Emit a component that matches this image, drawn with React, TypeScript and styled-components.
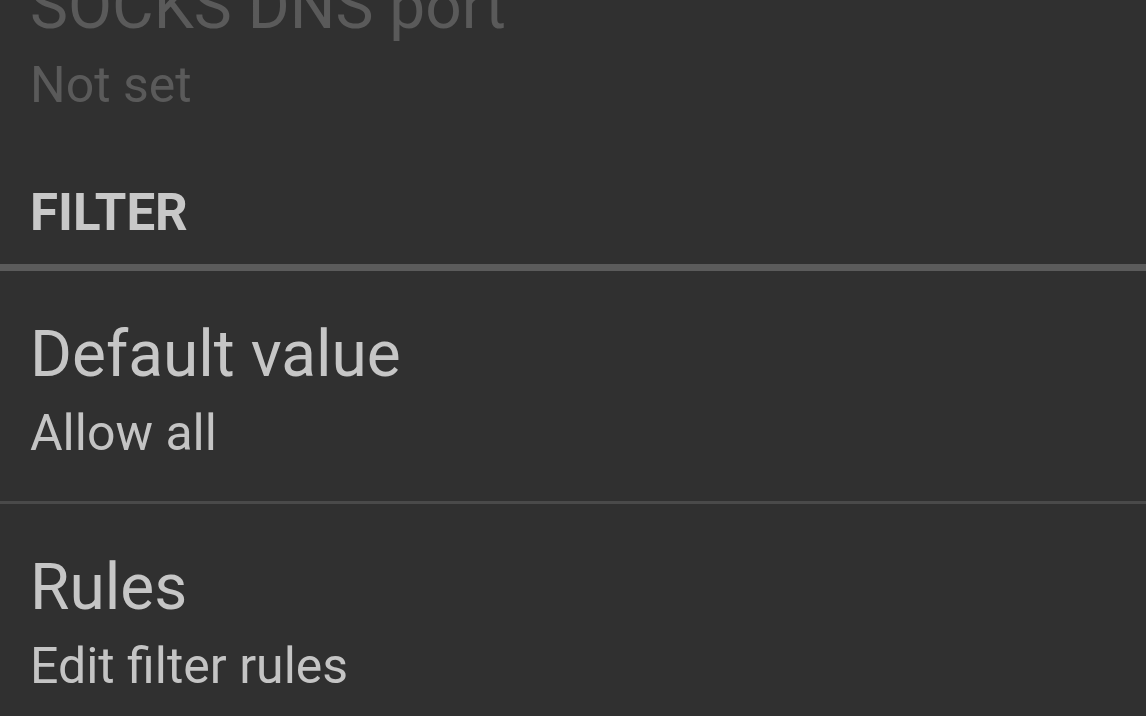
import React from 'react';
import styled, { createGlobalStyle } from 'styled-components';

type PrefItem = {
  title: string;
  summary: string;
  disabled?: boolean;
};

const GlobalStyle = createGlobalStyle`
  html, body {
    margin: 0;
    padding: 0;
    background: #303030;
  }
  body {
    font-family: Roboto, "Liberation Sans", sans-serif;
  }
`;

const proxyItems: PrefItem[] = [{ title: 'SOCKS DNS port', summary: 'Not set', disabled: true }];

const filterItems: PrefItem[] = [
  { title: 'Default value', summary: 'Allow all' },
  { title: 'Rules', summary: 'Edit filter rules' },
];

const Preference = ({ title, summary, disabled, divider }: PrefItem & { divider?: boolean }) => (
  <Row $divider={divider}>
    <Title $disabled={disabled}>{title}</Title>
    <Summary $disabled={disabled}>{summary}</Summary>
  </Row>
);

const App = () => {
  return (
    <Screen>
      <GlobalStyle />
      <List>
        {proxyItems.map((item) => (
          <Preference key={item.title} {...item} />
        ))}
        <Category>FILTER</Category>
        {filterItems.map((item, i) => (
          <Preference key={item.title} {...item} divider={i < filterItems.length - 1} />
        ))}
      </List>
    </Screen>
  );
};

const Screen = styled.div`
  width: 1146px;
  height: 716px;
  overflow: hidden;
  background: #303030;
`;

const List = styled.div`
  display: flex;
  flex-direction: column;
  margin-top: -77px;
`;

const Row = styled.div<{ $divider?: boolean }>`
  display: flex;
  flex-direction: column;
  padding: 46px 30px 38px;
  border-bottom: ${(p) => (p.$divider ? '3px solid #4a4a4a' : 'none')};
`;

const Title = styled.div<{ $disabled?: boolean }>`
  font-size: 64px;
  line-height: 76px;
  color: ${(p) => (p.$disabled ? '#5a5a5a' : '#c6c6c6')};
  white-space: nowrap;
`;

const Summary = styled.div<{ $disabled?: boolean }>`
  font-size: 50px;
  line-height: 60px;
  margin-top: 10px;
  color: ${(p) => (p.$disabled ? '#5a5a5a' : '#c4c4c4')};
  white-space: nowrap;
`;

const Category = styled.div`
  font-size: 51px;
  line-height: 60px;
  font-weight: bold;
  color: #c8c8c8;
  padding: 30px 30px 21px;
  border-bottom: 7px solid #5b5b5b;
`;

export default App;
